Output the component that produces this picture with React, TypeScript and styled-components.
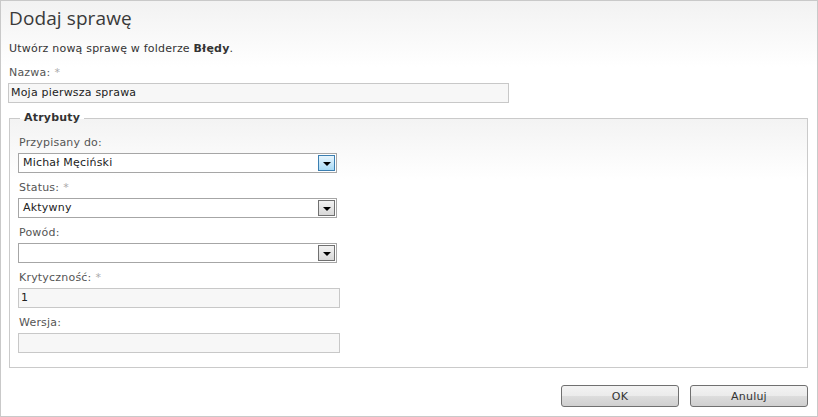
import React from "react";
import styled, { createGlobalStyle, css } from "styled-components";

const Global = createGlobalStyle`
  html, body { margin: 0; padding: 0; background: #fff; }
  * { box-sizing: border-box; }
`;

const Dialog = styled.div`
  width: 818px;
  height: 417px;
  border: 1px solid #c9c9c9;
  background: linear-gradient(#f2f2f2 0px, #ffffff 66px);
  padding: 0 9px 0 7px;
  display: flex;
  flex-direction: column;
  font-family: "DejaVu Sans", Verdana, sans-serif;
  font-size: 11px;
  letter-spacing: 0.2px;
  color: #333;
`;

const Title = styled.h1`
  margin: 4px 0 0 1px;
  font-family: "Open Sans", "Segoe UI", sans-serif;
  font-weight: 400;
  font-size: 19px;
  line-height: 26px;
  letter-spacing: 0.1px;
  color: #3a3a3a;
`;

const Intro = styled.p`
  margin: 11px 0 0 1px;
  line-height: 14px;
  color: #333;
  b { font-weight: bold; }
`;

const Field = styled.div<{ $top?: number }>`
  display: flex;
  flex-direction: column;
  margin-top: ${(p) => p.$top ?? 7}px;
`;

const Label = styled.label`
  line-height: 15px;
  color: #555;
  margin: 0 0 3px 1px;
`;

const Req = styled.span`
  color: #aaa;
  margin-left: 4px;
`;

const TextInput = styled.div<{ $width: number }>`
  width: ${(p) => p.$width}px;
  height: 20px;
  border: 1px solid #c8c8c8;
  background: #f7f7f7;
  padding: 0 0 0 2px;
  line-height: 18px;
  color: #222;
`;

const SelectBox = styled.div`
  width: 319px;
  height: 20px;
  border: 1px solid #a6a6a6;
  background: #fff;
  display: flex;
  align-items: center;
  justify-content: space-between;
  padding: 0 1px 0 4px;
  line-height: 18px;
  color: #222;
`;

const DropButton = styled.span<{ $active?: boolean }>`
  width: 17px;
  height: 16px;
  border: 1px solid #707070;
  background: linear-gradient(#f2f2f2, #d8d8d8);
  display: flex;
  align-items: center;
  justify-content: center;
  ${(p) =>
    p.$active &&
    css`
      border-color: #3c7fb1;
      background: linear-gradient(#e8f5fd, #a9daf5);
    `}
`;

const Arrow = styled.span`
  width: 0;
  height: 0;
  border-left: 4px solid transparent;
  border-right: 4px solid transparent;
  border-top: 4px solid #000;
  margin-top: 1px;
`;

const Fieldset = styled.fieldset`
  margin: 8px 0 0 1px;
  padding: 0 0 14px 8px;
  border: 1px solid #cacaca;
  background: linear-gradient(#f3f3f3 0px, #ffffff 60px);
  min-width: 0;
`;

const Legend = styled.legend`
  padding: 0 4px;
  margin-left: 2px;
  font-weight: bold;
  color: #333;
  line-height: 14px;
`;

const Footer = styled.div`
  display: flex;
  justify-content: flex-end;
  gap: 11px;
  margin-top: 17px;
`;

const Button = styled.button`
  width: 118px;
  height: 22px;
  border: 1px solid #707070;
  border-radius: 3px;
  background: linear-gradient(#f3f3f3 0%, #ebebeb 50%, #dddddd 51%, #cfcfcf 100%);
  font-family: "DejaVu Sans", Verdana, sans-serif;
  font-size: 11px;
  letter-spacing: 0.2px;
  color: #333;
  padding: 0;
`;

function Select({ value, active }: { value: string; active?: boolean }) {
  return (
    <SelectBox>
      <span>{value}</span>
      <DropButton $active={active}>
        <Arrow />
      </DropButton>
    </SelectBox>
  );
}

export default function App() {
  return (
    <>
      <Global />
      <Dialog>
        <Title>Dodaj sprawę</Title>
        <Intro>
          Utwórz nową sprawę w folderze <b>Błędy</b>.
        </Intro>
        <Field $top={9}>
          <Label>
            Nazwa:<Req>*</Req>
          </Label>
          <TextInput $width={501}>Moja pierwsza sprawa</TextInput>
        </Field>
        <Fieldset>
          <Legend>Atrybuty</Legend>
          <Field $top={10}>
            <Label>Przypisany do:</Label>
            <Select value="Michał Męciński" active />
          </Field>
          <Field>
            <Label>
              Status:<Req>*</Req>
            </Label>
            <Select value="Aktywny" />
          </Field>
          <Field>
            <Label>Powód:</Label>
            <Select value="" />
          </Field>
          <Field>
            <Label>
              Krytyczność:<Req>*</Req>
            </Label>
            <TextInput $width={322}>1</TextInput>
          </Field>
          <Field>
            <Label>Wersja:</Label>
            <TextInput $width={322}></TextInput>
          </Field>
        </Fieldset>
        <Footer>
          <Button>OK</Button>
          <Button>Anuluj</Button>
        </Footer>
      </Dialog>
    </>
  );
}
